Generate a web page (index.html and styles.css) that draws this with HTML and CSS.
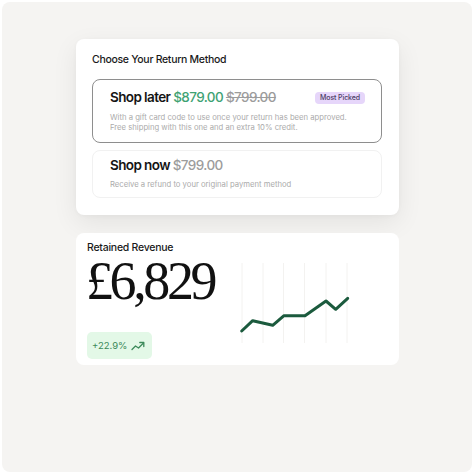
FILE: index.html
```html
<!DOCTYPE html>
<html>
<head>
<meta charset="utf-8">
<link rel="stylesheet" href="styles.css">
</head>
<body>
<div class="panel">
  <div class="card card-return">
    <div class="card-title">Choose Your Return Method</div>
    <div class="option option-active">
      <div class="option-head">
        <div class="option-name">Shop later <span class="price-green">$879.00</span> <span class="price-strike">$799.00</span></div>
        <span class="tag">Most Picked</span>
      </div>
      <div class="option-desc">With a gift card code to use once your return has been approved.<br>Free shipping with this one and an extra 10% credit.</div>
    </div>
    <div class="option option-plain">
      <div class="option-name">Shop now <span class="price-gray">$799.00</span></div>
      <div class="option-desc desc-now">Receive a refund to your original payment method</div>
    </div>
  </div>
  <div class="card card-revenue">
    <div class="rev-left">
      <div class="rev-title">Retained Revenue</div>
      <div class="rev-amount">£6,829</div>
      <div class="rev-badge">+22.9%
        <svg class="trend" width="14" height="10" viewBox="0 0 14 10"><path d="M1 8.5 L4.5 5 L7.5 7 L12.5 2" fill="none" stroke="#3c8a5a" stroke-width="1.3" stroke-linejoin="round" stroke-linecap="round"/><path d="M8.8 1.5 H12.8 V5.5" fill="none" stroke="#3c8a5a" stroke-width="1.3" stroke-linejoin="round" stroke-linecap="round"/></svg>
      </div>
    </div>
    <svg class="chart" width="114" height="84" viewBox="0 0 114 84">
      <g stroke="#f3f2f0" stroke-width="1">
        <line x1="4" y1="1" x2="4" y2="81"/>
        <line x1="25" y1="1" x2="25" y2="81"/>
        <line x1="45.5" y1="1" x2="45.5" y2="81"/>
        <line x1="66.5" y1="1" x2="66.5" y2="81"/>
        <line x1="88" y1="1" x2="88" y2="81"/>
        <line x1="109" y1="1" x2="109" y2="81"/>
      </g>
      <polyline points="3.7,69 14.7,58.7 34.7,63.3 46,53.7 67,53.7 88,39 97.7,47.3 109.7,36.3" fill="none" stroke="#1b5a3d" stroke-width="3" stroke-linejoin="round" stroke-linecap="round"/>
    </svg>
  </div>
</div>
</body>
</html>
```
FILE: styles.css
```css
* { box-sizing: border-box; }
html, body { margin: 0; padding: 0; background: #ffffff; }
body { font-family: Inter, "Noto Sans", "Liberation Sans", sans-serif; color: #161616; }
.panel {
  margin: 2px;
  width: 470px;
  height: 470px;
  background: #f5f4f2;
  border-radius: 8px;
  padding: 37px 0 0 74px;
  display: flex;
  flex-direction: column;
  gap: 18px;
}
.card {
  width: 323px;
  background: #ffffff;
  border-radius: 8px;
}
.card-return {
  height: 176px;
  padding: 14px 17px 0 16px;
  box-shadow: 0 8px 26px rgba(0,0,0,0.075), 0 1px 4px rgba(0,0,0,0.03);
}
.card-title {
  font-size: 10.5px;
  font-weight: 500;
  line-height: 13px;
  letter-spacing: -0.3px;
  color: #1a1a1a;
}
.option {
  border-radius: 8px;
  padding-left: 17px;
}
.option-active {
  margin-top: 13px;
  height: 64px;
  border: 1px solid #8e8e8e;
  padding-top: 9px;
  padding-right: 16px;
}
.option-plain {
  margin-top: 7px;
  height: 48px;
  border: 1px solid #f1f1f1;
  padding-top: 6px;
}
.option-head {
  display: flex;
  justify-content: space-between;
  align-items: center;
}
.option-name {
  font-size: 13.5px;
  font-weight: 600;
  line-height: 17px;
  letter-spacing: -0.6px;
  color: #141414;
}
.price-green { color: #3ea273; font-weight: 500; }
.price-strike { color: #9c9c9c; font-weight: 500; text-decoration: line-through; text-decoration-thickness: 1px; }
.price-gray { color: #9c9c9c; font-weight: 500; }
.tag {
  background: #e6d6fa;
  color: #4b3b63;
  font-size: 7px;
  font-weight: 500;
  line-height: 12px;
  height: 12px;
  padding: 0 5px;
  border-radius: 4px;
  letter-spacing: -0.1px;
}
.option-desc {
  margin-top: 7px;
  font-size: 7.7px;
  line-height: 10px;
  color: #ababab;
}
.desc-now { margin-top: 6px; }
.card-revenue {
  height: 132px;
  padding: 9px 0 0 11px;
  display: flex;
  align-items: flex-start;
}
.rev-left {
  width: 151px;
  display: flex;
  flex-direction: column;
  align-items: flex-start;
}
.rev-title {
  font-size: 10.5px;
  font-weight: 500;
  line-height: 12px;
  color: #1a1a1a;
  letter-spacing: -0.25px;
}
.rev-amount {
  font-family: "Liberation Serif", "Times New Roman", serif;
  font-size: 54px;
  line-height: 40px;
  letter-spacing: -3.4px;
  color: #111111;
  margin-top: 7px;
  margin-left: -1px;
}
.rev-badge {
  margin-top: 31px;
  height: 27px;
  width: 65px;
  background: #e3f8e7;
  border-radius: 5px;
  color: #3c8a5a;
  font-size: 9.5px;
  display: flex;
  align-items: center;
  gap: 4px;
  padding-left: 5px;
}
.chart {
  margin-top: 20px;
}
```
